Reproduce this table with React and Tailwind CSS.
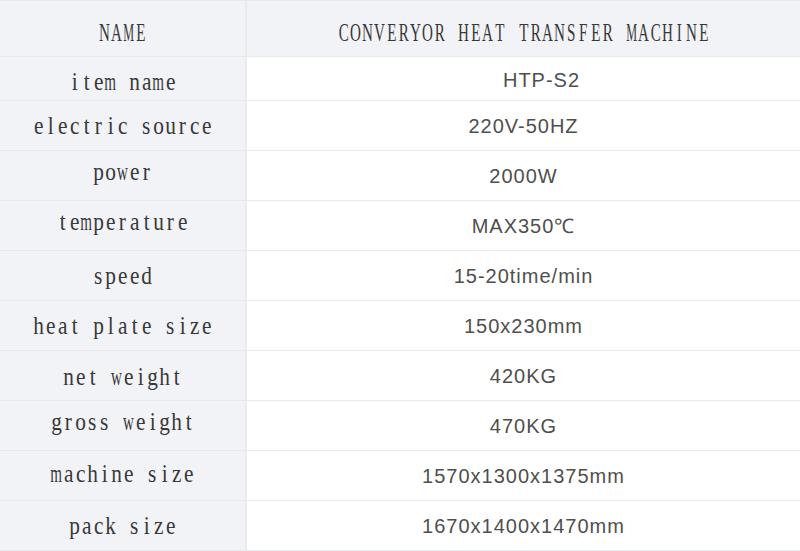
import React from "react";

const rows = [
  { label: "item name", value: "HTP-S2", h: "h-[43px]", lab: "pt-[6px]", val: "pt-[2px] pl-[36px]" },
  { label: "electric source", value: "220V-50HZ", h: "h-[49px]", lab: "pt-[1px]", val: "" },
  { label: "power", value: "2000W", h: "h-[49px]", lab: "pb-[7px]", val: "" },
  { label: "temperature", value: "MAX350℃", h: "h-[49px]", lab: "pb-[7px]", val: "" },
  { label: "speed", value: "15-20time/min", h: "h-[49px]", lab: "", val: "" },
  { label: "heat plate size", value: "150x230mm", h: "h-[49px]", lab: "", val: "" },
  { label: "net weight", value: "420KG", h: "h-[49px]", lab: "pt-[3px]", val: "" },
  { label: "gross weight", value: "470KG", h: "h-[49px]", lab: "pb-[7px]", val: "" },
  { label: "machine size", value: "1570x1300x1375mm", h: "h-[49px]", lab: "pb-[3px]", val: "" },
  { label: "pack size", value: "1670x1400x1470mm", h: "h-[49px]", lab: "pt-[1px]", val: "" },
];

const valueFont =
  "font-['Liberation_Sans',Arial,sans-serif] text-[20px] tracking-[1px] text-[#4f4f4f]";

// squeeze each serif glyph into a half-width cell
function squeeze(ch) {
  if (ch === "m" || ch === "w") return "scale-x-[0.58]";
  if (ch === "M" || ch === "W") return "scale-x-[0.47]";
  if (ch >= "A" && ch <= "Z") return "scale-x-[0.58]";
  return "scale-x-[0.82]";
}

function Mono({ text }) {
  return (
    <span className="flex font-['Liberation_Serif','Times_New_Roman',serif] text-[26px] leading-none text-[#383838]">
      {text.split("").map((ch, i) => (
        <span key={i} className="inline-flex w-[12px] justify-center">
          <span className={`inline-block whitespace-pre ${squeeze(ch)}`}>{ch}</span>
        </span>
      ))}
    </span>
  );
}

export default function App() {
  return (
    <div className="w-[800px] h-[551px] bg-white overflow-hidden border-t border-[#e8e9ec]">
      {/* Header */}
      <div className="flex h-[56px] bg-[#f2f3f7] border-b border-[#e8e9ec]">
        <div className="w-[247px] border-r-2 border-[#e9eaee] flex items-center justify-center pt-[8px]">
          <Mono text="NAME" />
        </div>
        <div className="flex-1 flex items-center justify-center pt-[8px]">
          <Mono text="CONVERYOR HEAT TRANSFER MACHINE" />
        </div>
      </div>

      {rows.map((row) => (
        <div key={row.label} className={`flex box-content border-b border-[#e8e9ec] ${row.h}`}>
          <div className={`w-[247px] bg-[#f2f3f7] border-r-2 border-[#e9eaee] flex items-center justify-center ${row.lab}`}>
            <Mono text={row.label} />
          </div>
          <div className={`flex-1 flex items-center justify-center ${row.val} ${valueFont}`}>
            {row.value}
          </div>
        </div>
      ))}
    </div>
  );
}
